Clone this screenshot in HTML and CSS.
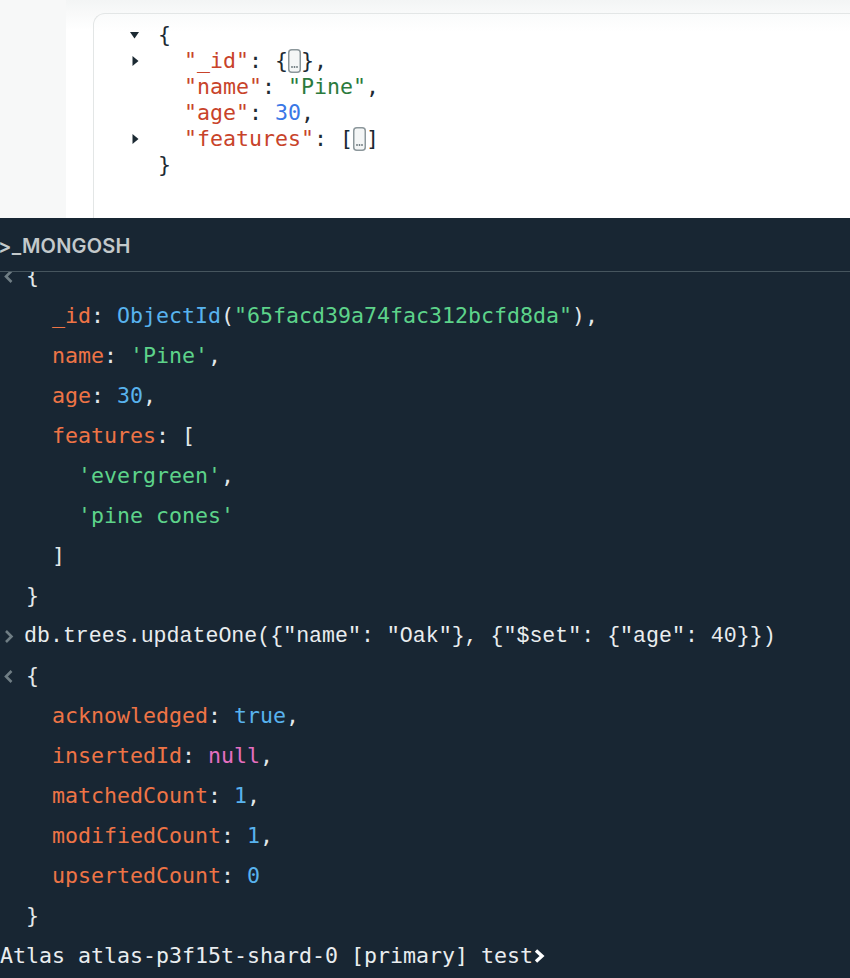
FILE: index.html
```html
<!DOCTYPE html>
<html>
<head>
<meta charset="utf-8">
<link rel="stylesheet" href="styles.css">
</head>
<body>
<div class="top">
  <div class="side"></div>
  <div class="main">
    <div class="card">
      <div class="jl"><span class="arr"><svg class="down" width="9" height="7" viewBox="0 0 9 7"><polygon points="0,0 9,0 4.5,6.5" fill="#1c2a33"/></svg></span><span class="p">{</span></div>
      <div class="jl"><span class="arr"><svg class="right" width="7" height="10" viewBox="0 0 7 10"><polygon points="0.5,0 6.5,5 0.5,10" fill="#1c2a33"/></svg></span><span class="p">  </span><span class="k">"_id"</span><span class="p">: {</span><svg class="more" width="13" height="24" viewBox="0 0 13 24"><rect x="0.75" y="0.75" width="11.5" height="22.5" rx="3" fill="#f4f6f6" stroke="#8c979b" stroke-width="1.5"/><circle cx="4" cy="18" r="0.9" fill="#68757a"/><circle cx="6.5" cy="18" r="0.9" fill="#68757a"/><circle cx="9" cy="18" r="0.9" fill="#68757a"/></svg><span class="p">},</span></div>
      <div class="jl"><span class="arr"></span><span class="p">  </span><span class="k">"name"</span><span class="p">: </span><span class="s">"Pine"</span><span class="p">,</span></div>
      <div class="jl"><span class="arr"></span><span class="p">  </span><span class="k">"age"</span><span class="p">: </span><span class="n">30</span><span class="p">,</span></div>
      <div class="jl"><span class="arr"><svg class="right" width="7" height="10" viewBox="0 0 7 10"><polygon points="0.5,0 6.5,5 0.5,10" fill="#1c2a33"/></svg></span><span class="p">  </span><span class="k">"features"</span><span class="p">: [</span><svg class="more" width="13" height="24" viewBox="0 0 13 24"><rect x="0.75" y="0.75" width="11.5" height="22.5" rx="3" fill="#f4f6f6" stroke="#8c979b" stroke-width="1.5"/><circle cx="4" cy="18" r="0.9" fill="#68757a"/><circle cx="6.5" cy="18" r="0.9" fill="#68757a"/><circle cx="9" cy="18" r="0.9" fill="#68757a"/></svg><span class="p">]</span></div>
      <div class="jl"><span class="arr"></span><span class="p">}</span></div>
    </div>
  </div>
</div>
<div class="shell">
  <div class="shell-header"><span class="title">&gt;_MONGOSH</span></div>
  <div class="shell-body">
    <div class="scroll">
      <div class="sl"><span class="mk"><svg width="11" height="15" viewBox="0 0 11 15"><path d="M8.5 2 L3 7.5 L8.5 13" fill="none" stroke="#6f7d84" stroke-width="2.6"/></svg></span><span class="out"><span class="w">{</span></span></div>
      <div class="sl"><span class="mk"></span><span class="out"><span class="w">  </span><span class="k">_id</span><span class="w">: </span><span class="b">ObjectId</span><span class="w">(</span><span class="g">"65facd39a74fac312bcfd8da"</span><span class="w">),</span></span></div>
      <div class="sl"><span class="mk"></span><span class="out"><span class="w">  </span><span class="k">name</span><span class="w">: </span><span class="g">'Pine'</span><span class="w">,</span></span></div>
      <div class="sl"><span class="mk"></span><span class="out"><span class="w">  </span><span class="k">age</span><span class="w">: </span><span class="b">30</span><span class="w">,</span></span></div>
      <div class="sl"><span class="mk"></span><span class="out"><span class="w">  </span><span class="k">features</span><span class="w">: [</span></span></div>
      <div class="sl"><span class="mk"></span><span class="out"><span class="w">    </span><span class="g">'evergreen'</span><span class="w">,</span></span></div>
      <div class="sl"><span class="mk"></span><span class="out"><span class="w">    </span><span class="g">'pine cones'</span></span></div>
      <div class="sl"><span class="mk"></span><span class="out"><span class="w">  ]</span></span></div>
      <div class="sl"><span class="mk"></span><span class="out"><span class="w">}</span></span></div>
      <div class="sl"><span class="mk"><svg width="11" height="15" viewBox="0 0 11 15"><path d="M3 2 L8.5 7.5 L3 13" fill="none" stroke="#6f7d84" stroke-width="2.6"/></svg></span><span class="in">db.trees.updateOne({"name": "Oak"}, {"$set": {"age": 40}})</span></div>
      <div class="sl"><span class="mk"><svg width="11" height="15" viewBox="0 0 11 15"><path d="M8.5 2 L3 7.5 L8.5 13" fill="none" stroke="#6f7d84" stroke-width="2.6"/></svg></span><span class="out"><span class="w">{</span></span></div>
      <div class="sl"><span class="mk"></span><span class="out"><span class="w">  </span><span class="k">acknowledged</span><span class="w">: </span><span class="b">true</span><span class="w">,</span></span></div>
      <div class="sl"><span class="mk"></span><span class="out"><span class="w">  </span><span class="k">insertedId</span><span class="w">: </span><span class="pk">null</span><span class="w">,</span></span></div>
      <div class="sl"><span class="mk"></span><span class="out"><span class="w">  </span><span class="k">matchedCount</span><span class="w">: </span><span class="b">1</span><span class="w">,</span></span></div>
      <div class="sl"><span class="mk"></span><span class="out"><span class="w">  </span><span class="k">modifiedCount</span><span class="w">: </span><span class="b">1</span><span class="w">,</span></span></div>
      <div class="sl"><span class="mk"></span><span class="out"><span class="w">  </span><span class="k">upsertedCount</span><span class="w">: </span><span class="b">0</span></span></div>
      <div class="sl"><span class="mk"></span><span class="out"><span class="w">}</span></span></div>
      <div class="sl prompt"><span class="ptext">Atlas atlas-p3f15t-shard-0 [primary] test</span><svg class="chev" width="13" height="16" viewBox="0 0 13 16"><path d="M3 2.5 L9 8 L3 13.5" fill="none" stroke="#ffffff" stroke-width="3.4"/></svg></div>
    </div>
  </div>
</div>
</body>
</html>
```
FILE: styles.css
```css
html, body {
  margin: 0;
  padding: 0;
}
body {
  width: 850px;
  height: 978px;
  overflow: hidden;
  background: #182633;
  font-family: "DejaVu Sans Mono", monospace;
}
.top {
  display: flex;
  height: 218px;
  background: #fff;
}
.side {
  width: 66px;
  flex: none;
  background: #f7f8f8;
}
.main {
  flex: 1;
  padding: 13px 0 0 27px;
  background: linear-gradient(#f3f5f5 0, #f8f9f9 12px, #fff 30px);
}
.card {
  box-sizing: border-box;
  height: 100%;
  border: 1px solid #e3e6e6;
  border-right: 0;
  border-bottom: 0;
  border-top-left-radius: 12px;
  background: linear-gradient(#fafbfb 0, #fff 18px);
  padding: 8px 0 0 36px;
}
.jl {
  display: flex;
  align-items: center;
  height: 26px;
  font-size: 21.6px;
  line-height: 26px;
  white-space: pre;
  color: #1c2a33;
}
.arr {
  width: 28px;
  flex: none;
  display: flex;
  align-items: center;
}
.arr .right {
  margin-left: 2px;
}
.jl .k { color: #c8432a; }
.jl .s { color: #2b7a3d; }
.jl .n { color: #3a78e6; }
.jl .p { color: #1c2a33; }
.more {
  flex: none;
  display: block;
}
.shell {
  height: 760px;
}
.shell-header {
  box-sizing: border-box;
  height: 54px;
  border-bottom: 1px solid #46555e;
  display: flex;
  align-items: center;
  padding-top: 2px;
}
.title {
  font-family: Inter, "Liberation Sans", sans-serif;
  font-weight: 600;
  font-size: 20px;
  color: #c3c9cb;
  margin-left: -2px;
  letter-spacing: 0.2px;
}
.shell-body {
  height: 705px;
  overflow: hidden;
}
.scroll {
  margin-top: -16px;
}
.sl {
  display: flex;
  align-items: center;
  height: 40px;
  white-space: pre;
  font-size: 21.6px;
  line-height: 40px;
}
.mk {
  width: 26px;
  flex: none;
  display: flex;
  align-items: center;
  padding-left: 3px;
  box-sizing: border-box;
}
.out {
  font-family: "DejaVu Sans Mono", monospace;
}
.in {
  font-family: "Liberation Mono", monospace;
  color: #e9edef;
  margin-left: -2px;
}
.w { color: #e3e8ea; }
.k { color: #ee7446; }
.g { color: #5dd38a; }
.b { color: #58b3ee; }
.pk { color: #e56fc1; }
.prompt .ptext {
  font-family: "DejaVu Sans Mono", monospace;
  color: #e9edef;
}
.chev {
  flex: none;
}
```
